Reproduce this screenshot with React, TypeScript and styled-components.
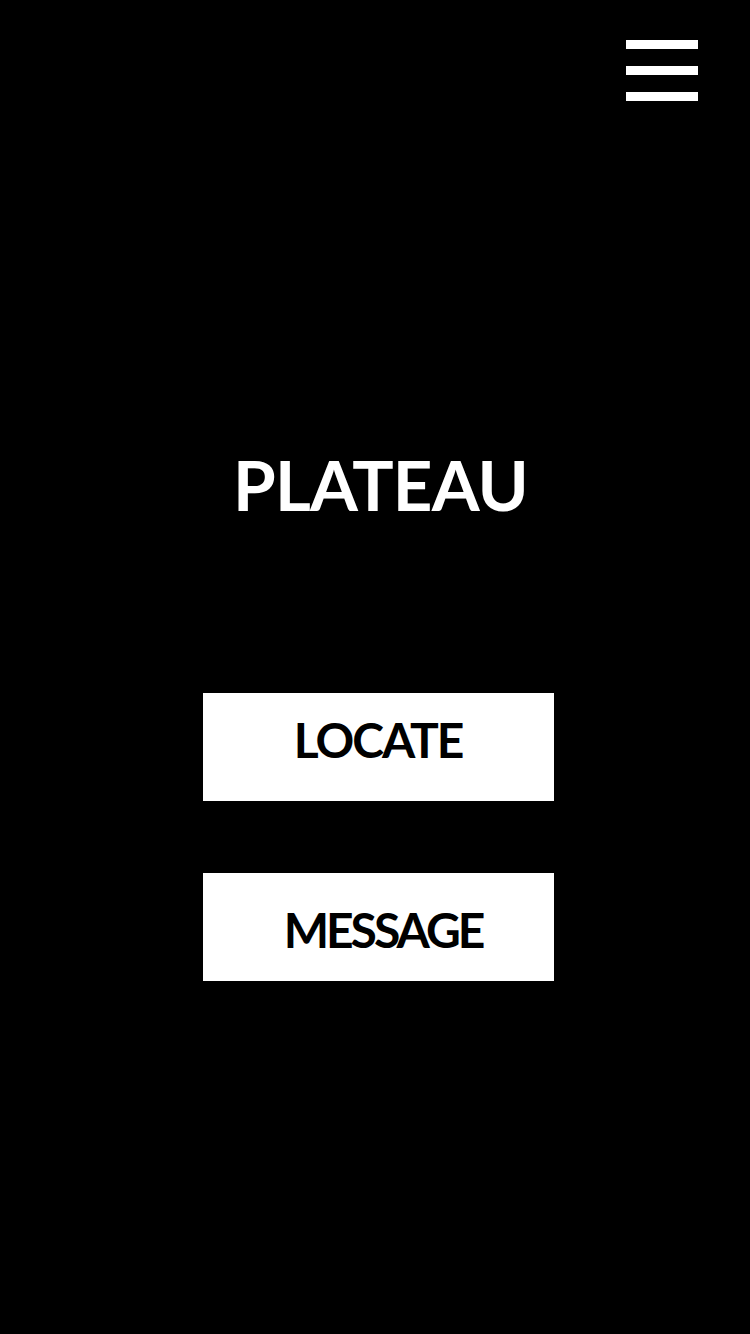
import React from "react";
import styled, { createGlobalStyle } from "styled-components";

const Global = createGlobalStyle`
  html, body { margin: 0; padding: 0; background: #000; }
  body { font-family: Lato, "Open Sans", sans-serif; }
`;

const Page = styled.div`
  min-height: 1334px;
  background: #000;
  display: flex;
  flex-direction: column;
  padding-top: 40px;
  box-sizing: border-box;
`;

const Header = styled.header`
  display: flex;
  justify-content: flex-end;
  padding-right: 52px;
`;

const MenuButton = styled.button`
  display: flex;
  flex-direction: column;
  gap: 17px;
  background: none;
  border: 0;
  padding: 0;
  cursor: pointer;
`;

const Bar = styled.span`
  display: block;
  width: 72px;
  height: 9px;
  background: #fff;
`;

const Title = styled.h1`
  margin: 349px 0 0;
  text-align: center;
  color: #fff;
  font-family: Lato, sans-serif;
  font-weight: 700;
  font-size: 69px;
  line-height: 69px;
  letter-spacing: -0.8px;
  padding-left: 11px;
`;

const Actions = styled.div`
  margin-top: 174px;
  display: flex;
  flex-direction: column;
  align-items: center;
  gap: 72px;
  padding-left: 6px;
`;

const ActionButton = styled.button<{ $shiftY: number; $shiftX: number; $tracking: number }>`
  width: 351px;
  height: 108px;
  background: #fff;
  border: 0;
  color: #000;
  font-family: Lato, sans-serif;
  font-weight: 700;
  font-size: 48px;
  letter-spacing: ${(p) => p.$tracking}px;
  display: flex;
  align-items: center;
  justify-content: center;
  padding: ${(p) => (p.$shiftY < 0 ? -p.$shiftY : 0)}px 0 ${(p) => (p.$shiftY > 0 ? p.$shiftY : 0)}px ${(p) => p.$shiftX}px;
  box-sizing: border-box;
  cursor: pointer;
`;

export default function App() {
  return (
    <>
      <Global />
      <Page>
        <Header>
          <MenuButton aria-label="Menu">
            <Bar />
            <Bar />
            <Bar />
          </MenuButton>
        </Header>
        <Title>PLATEAU</Title>
        <Actions>
          <ActionButton $shiftY={16} $shiftX={0} $tracking={-2}>LOCATE</ActionButton>
          <ActionButton $shiftY={-4} $shiftX={10} $tracking={-3}>MESSAGE</ActionButton>
        </Actions>
      </Page>
    </>
  );
}
